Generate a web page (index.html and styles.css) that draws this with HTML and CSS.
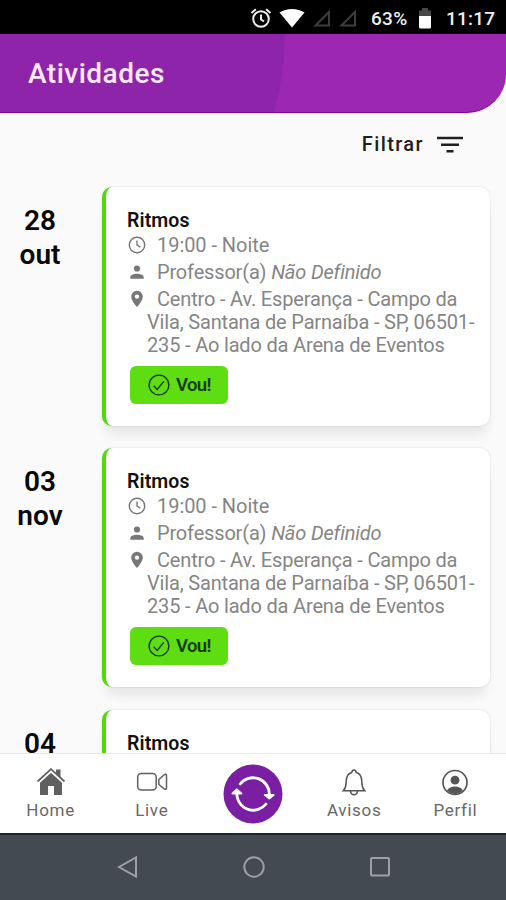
FILE: index.html
```html
<!DOCTYPE html>
<html lang="pt-BR">
<head>
<meta charset="utf-8">
<title>Atividades</title>
<link rel="stylesheet" href="styles.css">
</head>
<body>
<svg class="defs" aria-hidden="true">
  <symbol id="clock" viewBox="0 0 18 18"><g fill="none" stroke="currentColor" stroke-width="1.400"><circle cx="9" cy="9" r="7.700"/><path d="M9 4.500V9.200L12.300 11.200"/></g></symbol>
  <symbol id="person" viewBox="0 0 18 18"><circle cx="9" cy="5.500" r="3.100"/><path d="M2.300 15.700v-1.700c0-2.200 4.300-3.300 6.700-3.300s6.700 1.100 6.700 3.300v1.700z"/></symbol>
  <symbol id="pin" viewBox="0 0 18 18"><path fill-rule="evenodd" d="M9 .8a5.800 5.800 0 0 0-5.800 5.800C3.200 11 9 17.200 9 17.200s5.800-6.200 5.800-10.600A5.800 5.800 0 0 0 9 .8zM9 8.800a2.200 2.200 0 1 1 0-4.400 2.200 2.200 0 0 1 0 4.400z"/></symbol>
  <symbol id="check" viewBox="0 0 22 22"><g fill="none" stroke="currentColor" stroke-width="1.400"><circle cx="11" cy="11" r="9.900"/><path d="M5.700 11.700l3.500 3.700 6.600-8"/></g></symbol>
</svg>
<div class="screen">
  <div class="status">
    <svg class="alarm" width="22" height="22" viewBox="0 0 22 22" fill="none" stroke="#eee" stroke-width="2"><circle cx="11" cy="12" r="7.800"/><path d="M11 7.500v5l3 2M1.500 6l4.300-3.800M20.500 6l-4.300-3.800"/></svg>
    <svg class="wifi" width="26" height="20" viewBox="0 0 26 20"><path d="M.5 4.500C7.500-.3 18.500-.3 25.500 4.500L13 19.500z" fill="#fff"/></svg>
    <svg class="signal" width="18" height="18" viewBox="0 0 18 18"><path d="M2.500 16.500h13.500V3z" fill="none" stroke="#3d3d3d" stroke-width="2"/></svg>
    <svg class="signal" width="18" height="18" viewBox="0 0 18 18"><path d="M2.500 16.500h13.500V3z" fill="none" stroke="#3d3d3d" stroke-width="2"/></svg>
    <span class="percent">63%</span>
    <svg class="battery" width="14" height="22" viewBox="0 0 14 22"><path d="M1 3.500h3V1h6v2.500h3V9H1z" fill="#484848"/><path d="M1 9h12v11q0 1.500-1.500 1.500h-9Q1 21.500 1 20z" fill="#fff"/></svg>
    <span class="time">11:17</span>
  </div>
  <header class="header">
    <svg class="shade" viewBox="0 0 506 79" preserveAspectRatio="none"><path d="M0 0H285Q284 42 274 79H0z" fill="#8e24aa"/></svg>
    <h1>Atividades</h1>
  </header>
  <main class="content">
    <div class="filter"><span>Filtrar</span><svg width="26" height="17" viewBox="0 0 26 17"><path d="M0 2h26M4 8.700h18M9.500 15.300h7" stroke="#202020" stroke-width="2.500"/></svg></div>
    <section class="entry">
      <div class="date">28<br>out</div>
      <article class="card">
        <h2>Ritmos</h2>
        <p class="line hour"><svg class="icon"><use href="#clock"/></svg>19:00 - Noite</p>
        <p class="line teacher"><svg class="icon"><use href="#person"/></svg>Professor(a) <em>Não Definido</em></p>
        <p class="line place"><svg class="icon"><use href="#pin"/></svg>Centro - Av. Esperança - Campo da<br>Vila, Santana de Parnaíba - SP, 06501-<br>235 - Ao lado da Arena de Eventos</p>
        <button class="go"><svg><use href="#check"/></svg><span>Vou!</span></button>
      </article>
    </section>
    <section class="entry">
      <div class="date">03<br>nov</div>
      <article class="card">
        <h2>Ritmos</h2>
        <p class="line hour"><svg class="icon"><use href="#clock"/></svg>19:00 - Noite</p>
        <p class="line teacher"><svg class="icon"><use href="#person"/></svg>Professor(a) <em>Não Definido</em></p>
        <p class="line place"><svg class="icon"><use href="#pin"/></svg>Centro - Av. Esperança - Campo da<br>Vila, Santana de Parnaíba - SP, 06501-<br>235 - Ao lado da Arena de Eventos</p>
        <button class="go"><svg><use href="#check"/></svg><span>Vou!</span></button>
      </article>
    </section>
    <section class="entry">
      <div class="date">04</div>
      <article class="card"><h2>Ritmos</h2></article>
    </section>
  </main>
  <nav class="tabs">
    <a class="tab"><svg width="30" height="30" viewBox="0 0 30 30"><path d="M1.500 14.500L15 2.200l13.500 12.300" fill="none" stroke="#606060" stroke-width="1.700"/><path d="M20 2.500h4.500v8L20 6.300zM4 15.800L15 5.800l11 10V28h-8v-9h-6v9H4z" fill="#606060"/></svg><span>Home</span></a>
    <a class="tab"><svg width="32" height="30" viewBox="0 0 32 30" fill="none" stroke="#606060" stroke-width="1.500"><rect x="1.700" y="6.500" width="18.500" height="16.500" rx="3.500"/><path d="M22.800 12.500l5.400-4.700q2.300-1.500 2.300 1v12q0 2.500-2.300 1l-5.400-4.300z"/></svg><span>Live</span></a>
    <a class="tab middle"><svg width="60" height="60" viewBox="0 0 60 60"><circle cx="30" cy="30" r="29.500" fill="#7b1fa2"/><g fill="none" stroke="#fff" stroke-width="2.800" stroke-linecap="round" stroke-linejoin="round"><path d="M17.200 20A16.300 16.300 0 0 1 46.300 30V33M43 40A16.300 16.300 0 0 1 14 32V28"/><path d="M41.800 31L46.300 34.500l4.200-3.500zM9.500 29.500L13.800 25.500l4.500 4z" fill="#fff" stroke-width="2"/></g></svg></a>
    <a class="tab"><svg width="30" height="30" viewBox="0 0 30 30" fill="none" stroke="#555" stroke-width="1.500"><path d="M4.300 23.800c3-3.200 2.700-4.800 2.900-9.500.2-4.800 2.200-8.100 5.600-8.900.3-3.300 4.100-3.300 4.400 0 3.400.8 5.400 4.100 5.600 8.900.2 4.700-.1 6.300 2.900 9.500zM11.500 24c.4 5 6.600 5 7 0"/></svg><span>Avisos</span></a>
    <a class="tab"><svg width="30" height="30" viewBox="0 0 30 30"><circle cx="15" cy="15.500" r="12" fill="none" stroke="#555" stroke-width="1.700"/><circle cx="15" cy="13.200" r="4.400" fill="#555"/><path d="M7 23.500q2.500-4 8-4t8 4Q19.500 27 15 27t-8-3.500z" fill="#555"/></svg><span>Perfil</span></a>
  </nav>
  <div class="system">
    <svg width="24" height="24" viewBox="0 0 24 24"><path d="M3 12L20 2.500v19z"/></svg>
    <svg width="24" height="24" viewBox="0 0 24 24"><circle cx="12" cy="12" r="9.700"/></svg>
    <svg width="24" height="24" viewBox="0 0 24 24"><rect x="3" y="3" width="18" height="17.500" rx="1"/></svg>
  </div>
</div>
</body>
</html>
```
FILE: styles.css
```css
* { box-sizing: border-box; }
body { margin: 0; font-family: Roboto, "Liberation Sans", sans-serif; background: #fafafa; }
h1, h2, p { margin: 0; }
svg { flex: none; display: block; }
.defs { position: absolute; width: 0; height: 0; }
.screen { width: 506px; height: 900px; display: flex; flex-direction: column; overflow: hidden; }

.status { height: 34px; flex: none; background: #000; color: #eee; display: flex; align-items: center; justify-content: flex-end; padding: 2px 10px 0 0; font-size: 19px; font-weight: 500; }
.wifi { margin-left: 7px; }
.signal { margin-left: 8px; }
.percent { width: 38px; margin-left: 14px; white-space: nowrap; letter-spacing: .3px; }
.battery { margin-left: 9px; }
.time { width: 50px; margin-left: 14px; letter-spacing: .2px; }

.header { height: 79px; flex: none; position: relative; background: #9c27b0; border-bottom: 1px solid #850398; border-radius: 0 0 39px 0; overflow: hidden; display: flex; align-items: center; padding: 2px 0 0 28px; }
.shade { position: absolute; inset: 0; width: 100%; height: 100%; }
h1 { position: relative; color: #fce9ff; font-size: 28px; font-weight: 500; letter-spacing: .5px; line-height: 34px; }

.content { flex: 1; min-height: 0; overflow: hidden; }
.filter { height: 74px; padding: 18px 43px 0 0; display: flex; justify-content: flex-end; gap: 13px; font-size: 20px; font-weight: 500; letter-spacing: 1.400px; line-height: 26px; color: #202020; }
.filter svg { margin-top: 5px; }
.entry { display: flex; height: 238.500px; margin-bottom: 22.900px; }
.date { width: 80px; margin-right: 22px; padding-top: 17px; text-align: center; font-size: 28px; line-height: 33.500px; font-weight: 600; color: #080808; }
.card { width: 388px; height: 238.500px; background: #fff; border-left: 4px solid #50d90c; border-radius: 10px; padding: 21px 0 0 21px; box-shadow: 0 0 2px rgba(0,0,0,.16), 0 13px 12px -4px rgba(0,0,0,.08); }
h2 { font-size: 19.500px; line-height: 25px; font-weight: 600; letter-spacing: .1px; color: #111; }
.line { font-size: 20px; line-height: 23px; letter-spacing: -.17px; color: #858585; padding-left: 20px; text-indent: 10px; white-space: nowrap; position: relative; }
.icon { position: absolute; left: 1px; top: 2px; width: 18px; height: 18px; color: #777; fill: #777; }
.hour { margin-top: 1px; letter-spacing: -.05px; }
.teacher { margin-top: 4px; }
.place { margin-top: 4px; }
.go { display: flex; align-items: center; width: 98px; height: 38px; margin: 9px 0 0 3px; padding: 0 0 1px 18px; gap: 6px; border: 0; border-radius: 6px; background: #5ddd12; color: #183c08; font: 600 18.500px Roboto, sans-serif; letter-spacing: -.6px; }
.go svg { width: 22px; height: 22px; }

.tabs { height: 80px; flex: none; background: #fff; border-top: 1px solid #e8e8e8; display: grid; grid-template-columns: repeat(5, 1fr); }
.tab { display: flex; flex-direction: column; align-items: center; padding-top: 13px; color: #686868; font-size: 17px; letter-spacing: .7px; line-height: 26px; }
.tab.middle { padding-top: 10px; }
.system { height: 67px; flex: none; background: #434a50; border-top: 2px solid #182a30; display: flex; justify-content: center; padding: 20px 0 0 1px; gap: 102px; }
.system svg { fill: none; stroke: #9ba0a3; stroke-width: 2; }
```
